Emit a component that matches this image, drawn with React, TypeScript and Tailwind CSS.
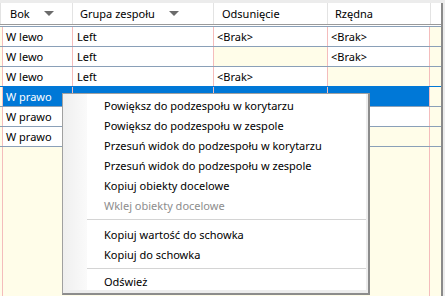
/**
 * Grid of sub-assembly placements with a context menu open over the selected row.
 */

/* ------------------------------------------------------------------ */
/* Data                                                                */
/* ------------------------------------------------------------------ */

// NB: '\u00a0' marks a filled cell whose value sits under the open menu
const H = '\u00a0';

type Row = { side: string; group: string; offset: string; ord: string; selected?: boolean };

const rows: Row[] = [
  { side: 'W lewo', group: 'Left', offset: '<Brak>', ord: '<Brak>' },
  { side: 'W lewo', group: 'Left', offset: '', ord: '<Brak>' },
  { side: 'W lewo', group: 'Left', offset: '<Brak>', ord: '' },
  { side: 'W prawo', group: 'Right', offset: H, ord: '<Brak>', selected: true },
  { side: 'W prawo', group: H, offset: H, ord: H },
  { side: 'W prawo', group: H, offset: H, ord: '' },
];

type MenuEntry = { label?: string; disabled?: boolean; sep?: boolean; short?: boolean };

const menu: MenuEntry[] = [
  { label: 'Powiększ do podzespołu w korytarzu' },
  { label: 'Powiększ do podzespołu w zespole' },
  { label: 'Przesuń widok do podzespołu w korytarzu' },
  { label: 'Przesuń widok do podzespołu w zespole' },
  { label: 'Kopiuj obiekty docelowe' },
  { label: 'Wklej obiekty docelowe', disabled: true },
  { sep: true },
  { label: 'Kopiuj wartość do schowka' },
  { label: 'Kopiuj do schowka' },
  { sep: true },
  { label: 'Odśwież', short: true },
];

/* ------------------------------------------------------------------ */
/* Pieces                                                              */
/* ------------------------------------------------------------------ */

function SortArrow() {
  return (
    <svg width="10" height="6" viewBox="0 0 10 6" className="ml-[14px] shrink-0">
      <path d="M0 0 L10 0 L5 5 Z" fill="#6b6b6b" />
    </svg>
  );
}

function HeaderCell({ label, width, arrow, pad }: { label: string; width: string; arrow?: boolean; pad: string }) {
  return (
    <div className={`${width} ${pad} flex items-center border-r border-[#e3e3e3] whitespace-nowrap`}>
      <span>{label}</span>
      {arrow && <SortArrow />}
    </div>
  );
}

function Cell({ text, width, sel, pad = 'pl-[3px]' }: { text: string; width: string; sel?: boolean; pad?: string }) {
  const bg = sel ? 'bg-[#0078d7] text-white' : text ? 'bg-white' : 'bg-[#fffde9]';
  return (
    <div className={`${width} ${bg} ${pad} flex items-center border-r border-[#f4bcbc] whitespace-nowrap overflow-hidden`}>
      {text}
    </div>
  );
}

/* ------------------------------------------------------------------ */
/* App                                                                 */
/* ------------------------------------------------------------------ */

export default function App() {
  return (
    <div className="relative w-[445px] h-[296px] overflow-hidden bg-[#ededed] text-[11px] leading-none text-black font-['Noto_Sans',sans-serif]">
      <div className="h-[3px] bg-[#ececec]" />

      <div className="flex h-[293px]">
        <div className="w-[441px] flex flex-col bg-[#fffde9]">
          {/* Header */}
          <div className="flex h-[22px] bg-white border-b border-[#9a9a9a]">
            <div className="w-[1px] bg-[#e3e3e3]" />
            <HeaderCell label="Bok" width="w-[72px]" pad="pl-[9px]" arrow />
            <HeaderCell label="Grupa zespołu" width="w-[141px]" pad="pl-[7px]" arrow />
            <HeaderCell label="Odsunięcie" width="w-[114px]" pad="pl-[8px]" />
            <HeaderCell label="Rzędna" width="w-[103px]" pad="pl-[7px]" />
            <div className="flex-1" />
          </div>
          <div className="h-[1px] bg-white" />

          {/* Rows */}
          {rows.map((r, i) => (
            <div
              key={i}
              className={`flex h-[20px] border-t ${r.selected ? 'border-[#0078d7]' : 'border-[#8aa0b8]'} ${i === rows.length - 1 ? 'h-[21px] border-b' : ''}`}
            >
              <div className="w-[3px] border-r border-[#f4bcbc]" />
              <Cell text={r.side} width="w-[70px]" sel={r.selected} />
              <Cell text={r.group} width="w-[141px]" sel={r.selected} pad="pl-[4px]" />
              <Cell text={r.offset} width="w-[114px]" sel={r.selected} />
              <Cell text={r.ord} width="w-[102px]" sel={r.selected} />
              <div className="flex-1" />
            </div>
          ))}

          {/* Empty grid area */}
          <div className="flex flex-1">
            <div className="w-[3px] border-r border-[#f4bcbc]" />
            <div className="w-[427px] border-r border-[#f4bcbc]" />
          </div>
        </div>
        <div className="w-[2px] bg-[#8a8a8a]" />
        <div className="flex-1 bg-[#ececec]" />
      </div>

      {/* Context menu */}
      <div className="absolute left-[62px] top-[93px] w-[308px] border-l border-t border-r-2 border-b-2 border-l-[#a0a0a0] border-t-[#a0a0a0] border-r-[#8c8c8c] border-b-[#8c8c8c] bg-[#ededed] pr-[2px] pb-[3px]">
        <div className="flex bg-white">
          <div className="w-[24px] bg-gradient-to-r from-[#efefef] to-[#fafafa]" />
          <div className="flex-1 flex flex-col pt-[1px]">
            {menu.map((m, i) =>
              m.sep ? (
                <div key={i} className="h-[9px] flex items-center">
                  <div className="w-full h-[1px] bg-[#d4d4d4]" />
                </div>
              ) : (
                <div
                  key={i}
                  className={`${m.short ? 'h-[17px]' : 'h-[20px]'} flex items-center pl-[17px] whitespace-nowrap ${m.disabled ? 'text-[#8d8d8d]' : ''}`}
                >
                  {m.label}
                </div>
              ),
            )}
          </div>
        </div>
      </div>
    </div>
  );
}
